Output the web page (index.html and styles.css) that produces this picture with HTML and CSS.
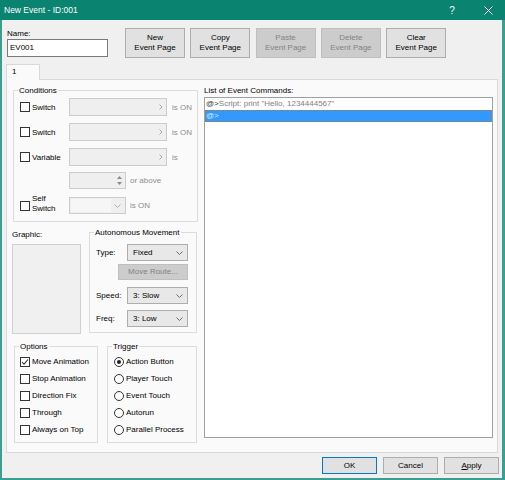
FILE: index.html
```html
<!DOCTYPE html>
<html>
<head>
<meta charset="utf-8">
<title>New Event - ID:001</title>
<link rel="stylesheet" href="styles.css">
</head>
<body>
<div class="frame">
  <div class="titlebar">
    <span class="title">New Event - ID:001</span>
    <span class="tb-help">?</span>
    <span class="tb-close"><svg width="9" height="9" viewBox="0 0 9 9"><path d="M0.5 0.5L8.5 8.5M8.5 0.5L0.5 8.5" stroke="#fff" stroke-width="1"/></svg></span>
  </div>
  <div class="client">
    <div class="toprow">
      <div class="namefield">
        <div class="lbl">Name:</div>
        <div class="textbox">EV001</div>
      </div>
      <div class="pagebtns">
        <div class="btn page">New<br>Event Page</div>
        <div class="btn page">Copy<br>Event Page</div>
        <div class="btn page disabled">Paste<br>Event Page</div>
        <div class="btn page disabled">Delete<br>Event Page</div>
        <div class="btn page">Clear<br>Event Page</div>
      </div>
    </div>

    <div class="tabs"><div class="tab">1</div></div>

    <div class="panel">
      <div class="leftcol">
        <div class="group conditions">
          <div class="gtitle">Conditions</div>
          <div class="crow first">
            <span class="clabel"><span class="cb"></span>Switch</span>
            <span class="combo wide"><svg width="4" height="6" viewBox="0 0 4 6"><path d="M0.5 0.5L3 3L0.5 5.5" fill="none" stroke="#a9a9a9"/></svg></span>
            <span class="after">is ON</span>
          </div>
          <div class="crow">
            <span class="clabel"><span class="cb"></span>Switch</span>
            <span class="combo wide"><svg width="4" height="6" viewBox="0 0 4 6"><path d="M0.5 0.5L3 3L0.5 5.5" fill="none" stroke="#a9a9a9"/></svg></span>
            <span class="after">is ON</span>
          </div>
          <div class="crow">
            <span class="clabel"><span class="cb"></span>Variable</span>
            <span class="combo wide"><svg width="4" height="6" viewBox="0 0 4 6"><path d="M0.5 0.5L3 3L0.5 5.5" fill="none" stroke="#a9a9a9"/></svg></span>
            <span class="after">is</span>
          </div>
          <div class="crow spinrow">
            <span class="clabel"></span>
            <span class="spin"><span class="spinbtns"><svg width="5" height="3" viewBox="0 0 5 3"><path d="M0 3L2.5 0L5 3Z" fill="#8a8a8a"/></svg><svg width="5" height="3" viewBox="0 0 5 3"><path d="M0 0L2.5 3L5 0Z" fill="#8a8a8a"/></svg></span></span>
            <span class="after small">or above</span>
          </div>
          <div class="crow selfrow">
            <span class="clabel"><span class="cb"></span><span class="twoline">Self<br>Switch</span></span>
            <span class="combo short"><span class="ddarea"></span><svg width="7" height="4" viewBox="0 0 7 4"><path d="M0.5 0.5L3.5 3.5L6.5 0.5" fill="none" stroke="#b0b0b0"/></svg></span>
            <span class="after small">is ON</span>
          </div>
        </div>

        <div class="midrow">
          <div class="graphic">
            <div class="glabel">Graphic:</div>
            <div class="gbox"></div>
          </div>
          <div class="group auton">
            <div class="gtitle">Autonomous Movement</div>
            <div class="arow first">
              <span class="alabel">Type:</span>
              <span class="select">Fixed<svg width="7" height="4" viewBox="0 0 7 4"><path d="M0.5 0.5L3.5 3.5L6.5 0.5" fill="none" stroke="#6e6e6e"/></svg></span>
            </div>
            <div class="btn route disabled">Move Route...</div>
            <div class="arow speed">
              <span class="alabel">Speed:</span>
              <span class="select">3: Slow<svg width="7" height="4" viewBox="0 0 7 4"><path d="M0.5 0.5L3.5 3.5L6.5 0.5" fill="none" stroke="#6e6e6e"/></svg></span>
            </div>
            <div class="arow freq">
              <span class="alabel">Freq:</span>
              <span class="select">3: Low<svg width="7" height="4" viewBox="0 0 7 4"><path d="M0.5 0.5L3.5 3.5L6.5 0.5" fill="none" stroke="#6e6e6e"/></svg></span>
            </div>
          </div>
        </div>

        <div class="botrow">
          <div class="group options">
            <div class="gtitle">Options</div>
            <div class="orow"><span class="cb checked"><svg width="8" height="8" viewBox="0 0 8 8"><path d="M1 4L3 6.2L7 1.5" fill="none" stroke="#333" stroke-width="1.1"/></svg></span>Move Animation</div>
            <div class="orow"><span class="cb"></span>Stop Animation</div>
            <div class="orow"><span class="cb"></span>Direction Fix</div>
            <div class="orow"><span class="cb"></span>Through</div>
            <div class="orow"><span class="cb"></span>Always on Top</div>
          </div>
          <div class="group trigger">
            <div class="gtitle">Trigger</div>
            <div class="orow"><span class="rb on"><span class="dot"></span></span>Action Button</div>
            <div class="orow"><span class="rb"></span>Player Touch</div>
            <div class="orow"><span class="rb"></span>Event Touch</div>
            <div class="orow"><span class="rb"></span>Autorun</div>
            <div class="orow"><span class="rb"></span>Parallel Process</div>
          </div>
        </div>
      </div>

      <div class="rightcol">
        <div class="llabel">List of Event Commands:</div>
        <div class="list">
          <div class="litem"><span class="at">@&gt;</span><span class="cmd">Script: print "Hello, 1234444567"</span></div>
          <div class="litem sel"><span>@&gt;</span></div>
        </div>
      </div>
    </div>

    <div class="dlgbtns">
      <div class="btn dlg ok">OK</div>
      <div class="btn dlg">Cancel</div>
      <div class="btn dlg"><u>A</u>pply</div>
    </div>
  </div>
</div>
</body>
</html>
```

FILE: styles.css
```css
* { box-sizing: border-box; }
html, body { margin: 0; padding: 0; }
body {
  width: 505px;
  height: 480px;
  overflow: hidden;
  font-family: "Liberation Sans", Arial, sans-serif;
  font-size: 8px;
  color: #000;
}

.frame {
  width: 505px;
  height: 480px;
  background: #3a9e90;
  display: flex;
  flex-direction: column;
}

.titlebar {
  height: 20px;
  flex: none;
  background: #0a8371;
  color: #fff;
  display: flex;
  align-items: center;
  padding-left: 4px;
}
.title { flex: 1; font-size: 8.5px; }
.tb-help { width: 30px; text-align: center; font-size: 10px; margin-right: 5px; }
.tb-close { width: 33px; display: flex; justify-content: center; align-items: center; }

.client {
  flex: 1;
  margin: 0 3px 2px 2px;
  background: #f0f0f0;
  display: flex;
  flex-direction: column;
}

/* top row */
.toprow { display: flex; margin-top: 8px; padding-left: 5px; }
.namefield { width: 101px; }
.lbl { height: 11px; line-height: 11px; }
.textbox {
  height: 18px;
  border: 1px solid #7a7a7a;
  background: #fff;
  padding-left: 2px;
  line-height: 16px;
}
.pagebtns { display: flex; gap: 5.3px; margin-left: 17px; }

.btn {
  background: #e1e1e1;
  border: 1px solid #adadad;
  text-align: center;
}
.btn.disabled { background: #cccccc; border-color: #bfbfbf; color: #838383; }
.btn.page {
  width: 60px;
  height: 30px;
  line-height: 10px;
  display: flex;
  align-items: center;
  justify-content: center;
}

/* tabs */
.tabs { display: flex; margin-top: 6px; padding-left: 4px; }
.tab {
  width: 34px;
  height: 16px;
  border: 1px solid #d9d9d9;
  border-bottom: none;
  background: #fafafa;
  padding-left: 5px;
  line-height: 14px;
  margin-bottom: -1px;
  position: relative;
  z-index: 1;
}
.panel {
  margin-left: 4px;
  width: 492px;
  height: 374px;
  border: 1px solid #d9d9d9;
  background: #fafafa;
  display: grid;
  grid-template-columns: 186px 289px;
  column-gap: 6px;
  padding: 5px 4px 0 5px;
}

/* group boxes */
.group { border: 1px solid #dcdcdc; }
.gtitle {
  width: fit-content;
  height: 13px;
  line-height: 13px;
  margin: -7px 0 0 4px;
  padding: 0 1px;
  background: #fafafa;
}

.leftcol { padding-top: 5px; }

.conditions { margin-left: 1px; width: 185px; height: 132px; }
.crow { display: flex; align-items: center; height: 18px; padding-left: 6px; margin-top: 7px; }
.crow.first { margin-top: 1px; }
.crow.spinrow { margin-top: 6px; height: 17px; }
.crow.selfrow { margin-top: 8px; height: 17px; }
.clabel { width: 49px; display: flex; align-items: center; flex: none; }
.twoline { line-height: 10px; margin-top: -3px; }

.cb {
  width: 10px;
  height: 10px;
  border: 1px solid #333;
  background: #fff;
  margin-right: 2px;
  flex: none;
  display: flex;
  align-items: center;
  justify-content: center;
}
.rb {
  width: 10px;
  height: 10px;
  border: 1px solid #333;
  border-radius: 50%;
  background: #fff;
  margin-right: 2px;
  flex: none;
  display: flex;
  align-items: center;
  justify-content: center;
}
.rb .dot { width: 4px; height: 4px; border-radius: 50%; background: #222; }

.combo {
  height: 18px;
  border: 1px solid #cccccc;
  background: #efefef;
  display: flex;
  align-items: center;
  justify-content: flex-end;
  padding-right: 3px;
  flex: none;
}
.combo.wide { width: 98px; }
.combo.short { width: 57px; height: 17px; padding: 1px 4px 1px 1px; justify-content: space-between; }
.ddarea { width: 40px; height: 13px; background: #f6f6f6; }
.after { margin-left: 5px; color: #8d8d8d; }
.after.small { margin-left: 4px; }

.spin {
  width: 57px;
  height: 17px;
  border: 1px solid #cccccc;
  background: #efefef;
  display: flex;
  justify-content: flex-end;
  flex: none;
}
.spinbtns {
  width: 11px;
  display: flex;
  flex-direction: column;
  align-items: center;
  justify-content: space-around;
  padding: 2px 0;
}

/* middle */
.midrow { display: flex; margin-top: 4px; }
.graphic { width: 69px; }
.glabel { padding-top: 2px; line-height: 13px; }
.gbox { margin-top: 3px; height: 90px; border: 1px solid #d0d0d0; background: #f0f0f0; }

.auton { margin-left: 8px; margin-top: 6px; width: 108px; height: 101px; }
.arow { display: flex; align-items: center; height: 17px; padding-left: 6px; }
.arow.first { margin-top: 5px; }
.arow.speed { margin-top: 7px; }
.arow.freq { margin-top: 6px; }
.alabel { width: 31px; flex: none; }
.select {
  width: 61px;
  height: 17px;
  border: 1px solid #adadad;
  background: #e8e8e8;
  display: flex;
  align-items: center;
  justify-content: space-between;
  padding: 0 4px 0 5px;
}
.btn.route {
  width: 70px;
  height: 16px;
  margin: 3px 0 0 28px;
  line-height: 14px;
}

/* bottom */
.botrow { display: flex; margin-top: 12px; }
.options { margin-left: 2px; width: 84px; height: 97px; }
.trigger { margin-left: 9px; width: 90px; height: 97px; }
.orow { display: flex; align-items: center; height: 17px; padding-left: 5px; white-space: nowrap; }
.trigger .orow { padding-left: 6px; }

/* right column */
.llabel { height: 12px; line-height: 12px; }
.list {
  height: 341px;
  border: 1px solid #a0a0a0;
  background: #fff;
}
.litem { height: 12px; line-height: 12px; padding-left: 1px; white-space: pre; }
.at { color: #333; }
.cmd { color: #808080; }
.litem.sel {
  background: #3399ff;
  color: #d8ebff;
  outline: 1px dotted #b0783a;
  outline-offset: -1px;
}

/* dialog buttons */
.dlgbtns { display: flex; justify-content: flex-end; gap: 6px; margin-top: 4px; padding-right: 3px; }
.btn.dlg { width: 55px; height: 17px; line-height: 15px; }
.btn.dlg.ok { border-color: #0078d7; }
```
